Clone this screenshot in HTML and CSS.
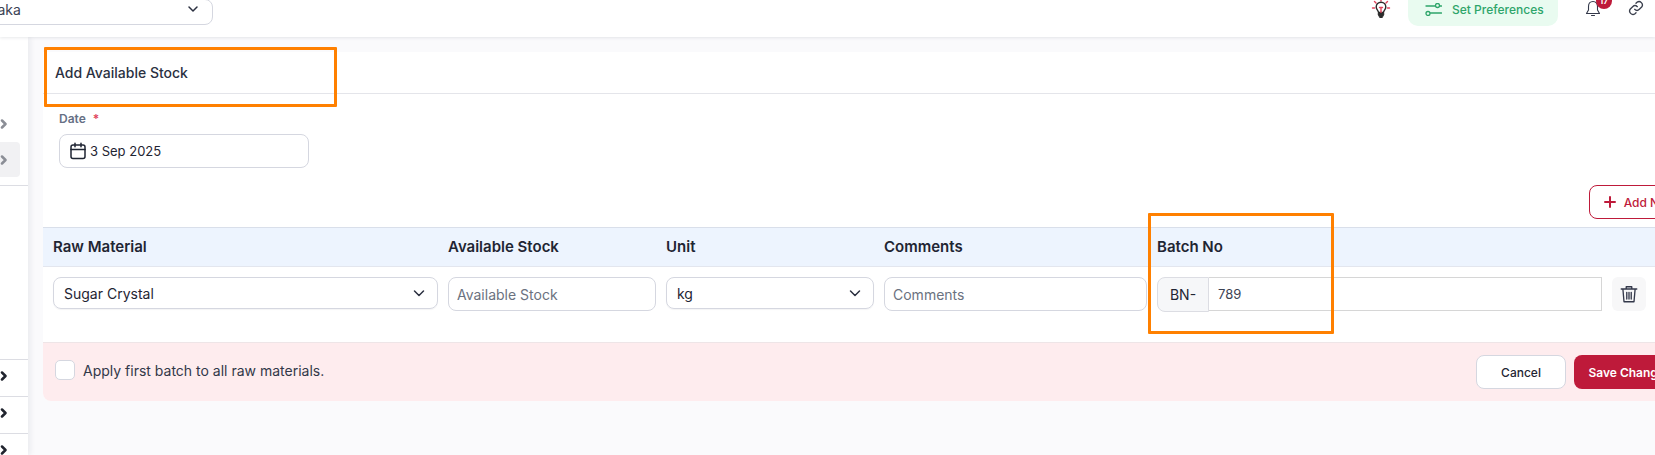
FILE: index.html
```html
<!doctype html>
<html lang="en">
<head>
  <meta charset="utf-8">
  <title>Add Available Stock</title>
  <link rel="stylesheet" href="styles.css">
</head>
<body>
  <header class="topbar">
    <div class="branch-select">
      <span>Dhaka</span>
      <svg class="chevron" width="14" height="14" viewBox="0 0 14 14"><path d="M3 5l4 4 4-4"/></svg>
    </div>
    <div class="topbar-right">
      <svg class="bulb" width="20" height="20" viewBox="0 0 20 20">
        <path class="rays" d="M10 0.500v1.500M3.500 2.500l1.500 1.500M16.500 2.500L15 4M1.500 9h2M16.500 9h2"/>
        <path class="glass" d="M7.500 13.500c0-2-2.300-3-2.300-5.500a4.800 4.800 0 0 1 9.600 0c0 2.500-2.300 3.500-2.300 5.500z"/>
        <path class="rays" d="M10 13.500V9M8.500 8.500h3"/>
        <path class="base" d="M7.500 15h5M8 16.500h4M9 18h2"/>
      </svg>
      <button class="prefs-btn">
        <svg width="17" height="13" viewBox="0 0 17 13"><circle cx="12.500" cy="2.500" r="2"/><circle cx="3" cy="10.500" r="2"/><path d="M1 3h9M15 3h1.500M5.500 10h11"/></svg>
        Set Preferences
      </button>
      <div class="bell-wrap">
        <svg width="16" height="18" viewBox="0 0 16 18"><path d="M8 1.500c-3 0-4.500 2.200-4.500 5v3.500L1.500 13.500h13L12.500 10V6.500c0-2.800-1.500-5-4.500-5zM6.500 15.500h3"/></svg>
        <span class="badge">17</span>
      </div>
      <svg class="link-icon" width="16" height="16" viewBox="0 0 24 24"><path d="M10 14a5 5 0 0 0 7 0l3.500-3.500a5 5 0 0 0-7-7L12 5"/><path d="M14 10a5 5 0 0 0-7 0l-3.500 3.500a5 5 0 0 0 7 7L12 19"/></svg>
    </div>
  </header>

  <div class="layout">
    <aside class="sidebar">
      <div class="side-group">
        <div class="side-item"><svg class="side-chevron grey" width="8" height="10" viewBox="0 0 8 10"><path d="M2 1.500L5.500 5 2 8.500"/></svg></div>
        <div class="side-item active"><svg class="side-chevron grey" width="8" height="10" viewBox="0 0 8 10"><path d="M2 1.500L5.500 5 2 8.500"/></svg></div>
      </div>
      <div class="side-rows">
        <div class="side-row"><svg class="side-chevron" width="8" height="10" viewBox="0 0 8 10"><path d="M2 1.500L5.500 5 2 8.500"/></svg></div>
        <div class="side-row"><svg class="side-chevron" width="8" height="10" viewBox="0 0 8 10"><path d="M2 1.500L5.500 5 2 8.500"/></svg></div>
        <div class="side-row"><svg class="side-chevron" width="8" height="10" viewBox="0 0 8 10"><path d="M2 1.500L5.500 5 2 8.500"/></svg></div>
      </div>
    </aside>

    <main class="content">
      <section class="card">
        <div class="card-title">Add Available Stock</div>

        <div class="date-block">
          <label class="date-label">Date <span class="req">*</span></label>
          <div class="date-input">
            <svg width="18" height="18" viewBox="0 0 18 18"><rect x="2" y="3" width="14" height="13.500" rx="2"/><path d="M2 7.500h14M6 1.200v3.500M12 1.200v3.500"/></svg>
            <span>3 Sep 2025</span>
          </div>
        </div>

        <div class="add-row">
          <button class="add-btn">
            <svg width="12" height="12" viewBox="0 0 12 12"><path d="M6 1v10M1 6h10"/></svg>
            Add New
          </button>
        </div>

        <div class="grid-row table-head">
          <div>Raw Material</div>
          <div>Available Stock</div>
          <div>Unit</div>
          <div>Comments</div>
          <div>Batch No</div>
        </div>

        <div class="grid-row table-row">
          <div class="select-box">
            <span>Sugar Crystal</span>
            <svg class="chevron" width="14" height="14" viewBox="0 0 14 14"><path d="M2.500 5l4.500 4.500L11.500 5"/></svg>
          </div>
          <input class="text-input" type="text" placeholder="Available Stock">
          <div class="select-box">
            <span>kg</span>
            <svg class="chevron" width="14" height="14" viewBox="0 0 14 14"><path d="M2.500 5l4.500 4.500L11.500 5"/></svg>
          </div>
          <input class="text-input" type="text" placeholder="Comments">
          <div class="batch-group">
            <span class="batch-prefix">BN-</span>
            <input class="batch-input" type="text" value="789">
          </div>
          <button class="delete-btn">
            <svg width="20" height="20" viewBox="0 0 18 18"><path d="M2 4.500h14M6.500 4V2.500h5V4M3.500 4.500l1 11.500h9l1-11.500M7 7.500v6M9 7.500v6M11 7.500v6"/></svg>
          </button>
        </div>

        <div class="card-footer">
          <label class="apply-all">
            <span class="checkbox"></span>
            Apply first batch to all raw materials.
          </label>
          <div class="footer-actions">
            <button class="cancel-btn">Cancel</button>
            <button class="save-btn">Save Changes</button>
          </div>
        </div>
      </section>
    </main>
  </div>

  <!-- annotation boxes drawn over the screenshot -->
  <div class="note note-title"></div>
  <div class="note note-batch"></div>
</body>
</html>
```

FILE: styles.css
```css
:root {
  --text: #1f2533;
  --muted: #667085;
  --line: #d5d7e0;
  --crimson: #be1a3a;
  --orange: #ff8000;
}
* {
  box-sizing: border-box;
}
html, body {
  margin: 0;
  height: 100%;
}
body {
  position: relative;
  width: 1655px;
  height: 455px;
  overflow: hidden;
  font-family: 'Inter', sans-serif;
  font-size: 14px;
  color: var(--text);
  background: #fafafc;
}
button {
  font-family: inherit;
  cursor: pointer;
}
svg {
  display: block;
  flex: none;
  fill: none;
  stroke: currentColor;
  stroke-linecap: round;
  stroke-linejoin: round;
}

/* top bar */
.topbar {
  position: relative;
  z-index: 2;
  display: flex;
  justify-content: space-between;
  height: 37px;
  background: #fff;
  box-shadow: 0 1px 3px rgba(30, 35, 60, 0.1);
}
.branch-select {
  display: flex;
  align-items: center;
  justify-content: space-between;
  width: 253px;
  height: 26px;
  margin: -1px 0 0 -40px;
  padding: 0 12px 6px 0;
  border: 1px solid var(--line);
  border-radius: 8px;
  font-size: 14px;
  color: #3c4354;
}
.branch-select span {
  margin-left: 18px;
}
.chevron {
  stroke-width: 1.500;
  color: #2b3040;
}
.topbar-right {
  display: flex;
  align-items: flex-start;
}
.bulb {
  margin: -1px 17px 0 0;
  color: #2b2b2b;
  stroke-width: 1.400;
}
.bulb .rays {
  stroke: #e0435c;
}
.bulb .base {
  stroke-width: 1.800;
}
.prefs-btn {
  display: flex;
  align-items: center;
  gap: 10px;
  width: 150px;
  height: 26px;
  margin-top: 0;
  padding: 0 0 8px 17px;
  border: none;
  border-radius: 0 0 10px 10px;
  background: #e9fbf0;
  color: #2ea56a;
  font-size: 12px;
  font-weight: 500;
}
.prefs-btn svg {
  stroke-width: 1.300;
}
.bell-wrap {
  position: relative;
  margin: 0 27px 0 27px;
}
.bell-wrap svg {
  stroke-width: 1.100;
  color: #33384a;
}
.badge {
  position: absolute;
  top: -7px;
  left: 11px;
  width: 16px;
  height: 16px;
  border-radius: 50%;
  background: var(--crimson);
  color: #fff;
  font-size: 9px;
  font-weight: 600;
  line-height: 16px;
  text-align: center;
}
.link-icon {
  margin: 0 11px 0 0;
  stroke-width: 2;
  color: #3a3f4d;
}

/* sidebar */
.layout {
  display: flex;
  height: 418px;
}
.sidebar {
  position: relative;
  width: 28px;
  background: #fff;
  box-shadow: 2px 0 6px rgba(30, 35, 60, 0.08);
}
.side-group {
  height: 149px;
  padding: 69px 0 8px;
  border-bottom: 1px solid #dcdde3;
}
.side-item {
  display: flex;
  align-items: center;
  width: 20px;
  height: 35px;
}
.side-item.active {
  margin-top: 1px;
  background: #f1f1f3;
  border-radius: 0 4px 4px 0;
}
.side-rows {
  margin-top: 173px;
}
.side-row {
  display: flex;
  align-items: center;
  height: 37px;
  padding-bottom: 5px;
  border-top: 1px solid #dcdde3;
}
.side-chevron {
  margin-left: 0;
  stroke-width: 2.500;
  color: #20242e;
}
.side-chevron.grey {
  color: #8b8e96;
}

/* card */
.content {
  flex: 1;
  min-width: 0;
  padding: 15px 0 0 15px;
}
.card {
  width: 1653px;
  background: #fff;
  border-radius: 0 0 8px 8px;
}
.card-title {
  height: 42px;
  padding: 12px 0 0 12px;
  border-bottom: 1px solid #e4e5ea;
  font-size: 14px;
  font-weight: 500;
  line-height: 17px;
  color: #2b3142;
}
.date-block {
  padding: 16px 0 0 16px;
}
.date-label {
  display: block;
  height: 16px;
  margin-bottom: 8px;
  padding-top: 1px;
  font-size: 12px;
  font-weight: 600;
  line-height: 16px;
  color: var(--muted);
}
.req {
  margin-left: 4px;
  color: #e0435c;
}
.date-input {
  display: flex;
  align-items: center;
  gap: 3px;
  width: 250px;
  height: 34px;
  padding-left: 9px;
  border: 1px solid var(--line);
  border-radius: 8px;
  font-size: 13px;
}
.date-input svg {
  stroke-width: 1.500;
}
.add-row {
  display: flex;
  justify-content: flex-end;
  margin-top: 17px;
  padding-right: 10px;
}
.add-btn {
  display: flex;
  align-items: center;
  gap: 8px;
  height: 34px;
  padding: 0 9px 0 14px;
  border: 1px solid var(--crimson);
  border-radius: 8px;
  background: #fff;
  color: var(--crimson);
  font-size: 12px;
  font-weight: 500;
}
.add-btn svg {
  stroke-width: 2;
}

/* table */
.grid-row {
  display: grid;
  grid-template-columns: 385px 208px 208px 263px 445px 34px;
  gap: 10px;
  padding-left: 10px;
}
.table-head {
  align-items: center;
  height: 40px;
  margin-top: 8px;
  padding-bottom: 2px;
  border-top: 1px solid #d9dfea;
  border-bottom: 1px solid #e3e6ee;
  background: #edf4fe;
  font-size: 15px;
  font-weight: 600;
}
.table-row {
  align-items: start;
  height: 75px;
  padding-top: 10px;
}
.select-box {
  display: flex;
  align-items: center;
  justify-content: space-between;
  height: 32px;
  padding: 0 11px 0 10px;
  border: 1px solid var(--line);
  border-radius: 8px;
  font-size: 14px;
  box-shadow: 0 1px 1px rgba(30, 35, 60, 0.05);
}
.text-input {
  width: 100%;
  height: 34px;
  padding: 0 8px;
  border: 1px solid var(--line);
  border-radius: 8px;
  outline: none;
  font-family: inherit;
  font-size: 14px;
  color: var(--text);
}
.text-input::placeholder {
  color: #6b7280;
  opacity: 1;
}
.batch-group {
  display: flex;
  height: 34px;
}
.batch-prefix {
  display: flex;
  align-items: center;
  justify-content: center;
  width: 52px;
  height: 35px;
  border: 1px solid #dcdde3;
  border-radius: 8px 0 0 8px;
  background: #f6f7f9;
  font-size: 14px;
}
.batch-input {
  flex: 1;
  min-width: 0;
  height: 34px;
  padding: 0 9px;
  border: 1px solid #d6d6d6;
  border-left: none;
  outline: none;
  font-family: inherit;
  font-size: 13px;
  color: #3c4354;
}
.delete-btn {
  display: flex;
  align-items: center;
  justify-content: center;
  height: 34px;
  padding: 0;
  border: none;
  border-radius: 6px;
  background: #f7f7f8;
  color: #33384a;
}
.delete-btn svg {
  stroke-width: 1.200;
}

/* footer */
.card-footer {
  display: flex;
  justify-content: space-between;
  height: 59px;
  padding: 12px 10px 0 12px;
  border-top: 1px solid #eee5e7;
  border-radius: 0 0 0 8px;
  background: #feecee;
}
.apply-all {
  display: flex;
  align-items: center;
  gap: 8px;
  height: 30px;
  font-size: 14px;
  color: #323849;
}
.checkbox {
  width: 20px;
  height: 20px;
  border: 1px solid var(--line);
  border-radius: 5px;
  background: #fff;
}
.footer-actions {
  display: flex;
  gap: 8px;
}
.cancel-btn {
  width: 90px;
  height: 34px;
  border: 1px solid var(--line);
  border-radius: 8px;
  background: #fff;
  color: var(--text);
  font-size: 12px;
  font-weight: 500;
}
.save-btn {
  width: 112px;
  height: 34px;
  border: none;
  border-radius: 8px;
  background: var(--crimson);
  color: #fff;
  font-size: 12px;
  font-weight: 600;
}

/* orange annotation boxes */
.note {
  position: absolute;
  border: 3px solid var(--orange);
  border-radius: 1px;
}
.note-title {
  left: 44px;
  top: 47px;
  width: 293px;
  height: 60px;
}
.note-batch {
  left: 1148px;
  top: 213px;
  width: 186px;
  height: 121px;
}
```
